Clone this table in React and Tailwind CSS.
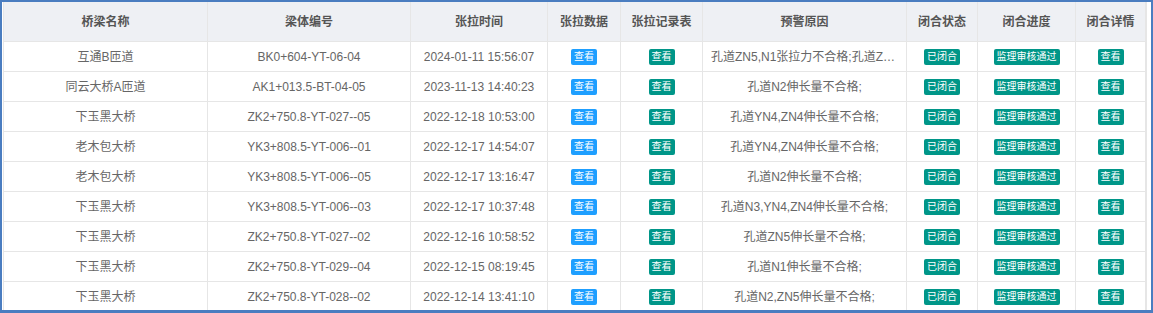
const cols = ['w-[204px]', 'w-[203px]', 'w-[137px]', 'w-[73px]', 'w-[82px]', 'w-[204px]', 'w-[71px]', 'w-[98px]', 'w-[70px]'];

const headers = ['桥梁名称', '梁体编号', '张拉时间', '张拉数据', '张拉记录表', '预警原因', '闭合状态', '闭合进度', '闭合详情'];

const rows = [
    ['互通B匝道', 'BK0+604-YT-06-04', '2024-01-11 15:56:07', '孔道ZN5,N1张拉力不合格;孔道ZN5,N1伸长量不合格;'],
    ['同云大桥A匝道', 'AK1+013.5-BT-04-05', '2023-11-13 14:40:23', '孔道N2伸长量不合格;'],
    ['下玉黑大桥', 'ZK2+750.8-YT-027--05', '2022-12-18 10:53:00', '孔道YN4,ZN4伸长量不合格;'],
    ['老木包大桥', 'YK3+808.5-YT-006--01', '2022-12-17 14:54:07', '孔道YN4,ZN4伸长量不合格;'],
    ['老木包大桥', 'YK3+808.5-YT-006--05', '2022-12-17 13:16:47', '孔道N2伸长量不合格;'],
    ['下玉黑大桥', 'YK3+808.5-YT-006--03', '2022-12-17 10:37:48', '孔道N3,YN4,ZN4伸长量不合格;'],
    ['下玉黑大桥', 'ZK2+750.8-YT-027--02', '2022-12-16 10:58:52', '孔道ZN5伸长量不合格;'],
    ['下玉黑大桥', 'ZK2+750.8-YT-029--04', '2022-12-15 08:19:45', '孔道N1伸长量不合格;'],
    ['下玉黑大桥', 'ZK2+750.8-YT-028--02', '2022-12-14 13:41:10', '孔道N2,ZN5伸长量不合格;'],
];

function Tag({ children, blue }) {
    return (
        <span className={`inline-block h-4 px-[3px] rounded-[2px] text-[10px] leading-4 text-white ${blue ? 'bg-[#1e9fff]' : 'bg-[#009688]'}`}>
            {children}
        </span>
    );
}

function Cell({ i, children, head }) {
    return (
        <div className={`${cols[i]} shrink-0 flex items-center justify-center px-2 border-r border-[#e6e6e6] overflow-hidden ${head ? 'font-bold text-[#555]' : ''}`}>
            {children}
        </div>
    );
}

export default function App() {
    return (
        <div className="w-[1153px] h-[313px] overflow-hidden bg-white border-l-2 border-t-2 border-r-2 border-b-[3px] border-[#4a7dc0] pl-px font-['Liberation_Sans','Noto_Sans_CJK_SC',sans-serif] text-[12px] text-[#666]">
            <div className="w-[1144px] border-l border-r border-[#e6e6e6]">
                {/* header */}
                <div className="flex h-10 bg-[#eef0f4] border-b border-[#e6e6e6]">
                    {headers.map((h, i) => (
                        <Cell key={i} i={i} head>{h}</Cell>
                    ))}
                </div>

                {rows.map((r, idx) => (
                    <div key={idx} className="flex h-[30px] border-b border-[#e6e6e6]">
                        <Cell i={0}>{r[0]}</Cell>
                        <Cell i={1}>{r[1]}</Cell>
                        <Cell i={2}>{r[2]}</Cell>
                        <Cell i={3}><Tag blue>查看</Tag></Cell>
                        <Cell i={4}><Tag>查看</Tag></Cell>
                        <Cell i={5}>
                            <span className="block min-w-0 max-w-full truncate text-center">{r[3]}</span>
                        </Cell>
                        <Cell i={6}><Tag>已闭合</Tag></Cell>
                        <Cell i={7}><Tag>监理审核通过</Tag></Cell>
                        <Cell i={8}><Tag>查看</Tag></Cell>
                    </div>
                ))}
            </div>
        </div>
    );
}
